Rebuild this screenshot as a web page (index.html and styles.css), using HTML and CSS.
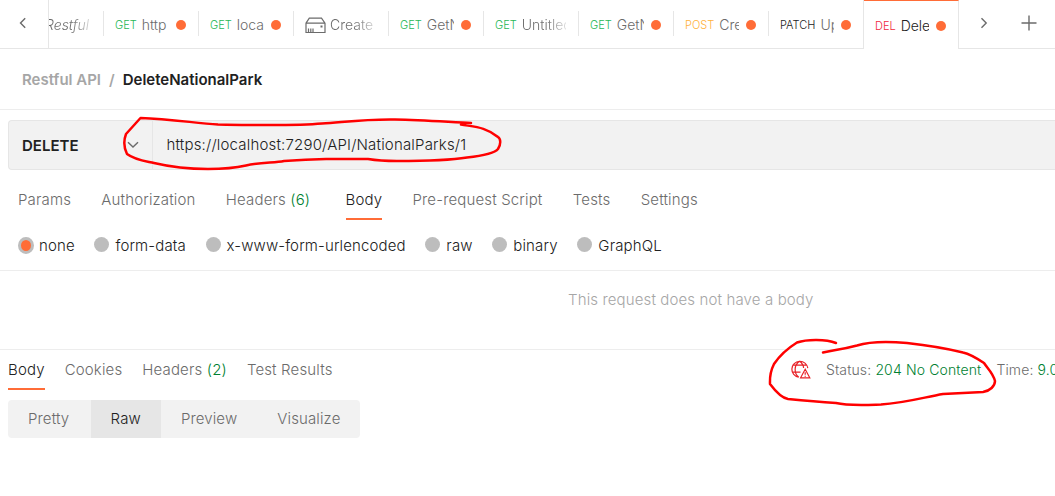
FILE: index.html
```html
<!DOCTYPE html>
<html lang="en">
<head>
<meta charset="utf-8">
<title>DeleteNationalPark</title>
<link rel="stylesheet" href="styles.css">
</head>
<body>
<div class="app">
  <header class="tabbar">
    <div class="scroll-left"><svg width="8" height="12" viewBox="0 0 8 12"><path d="M6.2 1.2 1.5 6 6.2 10.8" class="stroke"/></svg></div>
    <div class="tab first"><span class="title italic fade">Restful</span></div>
    <div class="tab"><span class="verb get">GET</span><span class="title">http</span><i class="dot"></i></div>
    <div class="tab"><span class="verb get">GET</span><span class="title">loca</span><i class="dot"></i></div>
    <div class="tab"><svg class="drive" width="21" height="17" viewBox="0 0 21 17"><path class="line" d="M1 6.2 4.3 1.2H16.5L20 6.2V15.5H1ZM1 6.2H20M3.5 15V11.5M5.8 15V11.5M8 15V11.5"/><path d="M15.5 8.5h2v2h-2z" fill="#6b6b6b"/></svg><span class="title wide fade create">Create</span></div>
    <div class="tab"><span class="verb get">GET</span><span class="title">GetN</span><i class="dot"></i></div>
    <div class="tab"><span class="verb get">GET</span><span class="title wide fade untitled">Untitled</span></div>
    <div class="tab"><span class="verb get">GET</span><span class="title">GetN</span><i class="dot"></i></div>
    <div class="tab"><span class="verb post">POST</span><span class="title">Cre</span><i class="dot"></i></div>
    <div class="tab last"><span class="verb patch">PATCH</span><span class="title">Up</span><i class="dot"></i></div>
    <div class="tab active"><span class="verb del">DEL</span><span class="title">Dele</span><i class="dot"></i></div>
    <div class="tab-actions">
      <svg width="8" height="12" viewBox="0 0 8 12"><path d="M1.5 1.2 6.2 6 1.5 10.8" class="stroke"/></svg>
      <svg class="plus" width="16" height="16" viewBox="0 0 16 16"><path d="M8 .5V15.5M.5 8H15.5" class="stroke"/></svg>
    </div>
  </header>

  <div class="crumbs"><span class="parent">Restful API</span><span class="slash">/</span><span class="current">DeleteNationalPark</span></div>

  <div class="request">
    <div class="urlbar">
      <div class="method"><span>DELETE</span><svg width="12" height="8" viewBox="0 0 12 8"><path d="M1 1.2 6 6 11 1.2" class="stroke"/></svg></div>
      <div class="url">https://localhost:7290/API/NationalParks/1</div>
    </div>
    <nav class="subtabs">
      <span>Params</span><span>Authorization</span><span class="counted">Headers <b>(6)</b></span><span class="on">Body</span><span>Pre-request Script</span><span>Tests</span><span>Settings</span>
    </nav>
    <div class="radios">
      <label class="checked"><i></i><span>none</span></label>
      <label><i></i><span>form-data</span></label>
      <label><i></i><span>x-www-form-urlencoded</span></label>
      <label><i></i><span>raw</span></label>
      <label><i></i><span>binary</span></label>
      <label><i></i><span>GraphQL</span></label>
    </div>
  </div>
  <div class="empty"><span>This request does not have a body</span></div>

  <section class="response">
    <div class="response-head">
      <nav class="subtabs small">
        <span class="on">Body</span><span>Cookies</span><span>Headers <b>(2)</b></span><span>Test Results</span>
      </nav>
      <div class="status">
        <svg class="globe" width="21" height="20" viewBox="0 0 21 20"><path d="M17.8 8.2A8 8 0 1 0 8.8 17.2M9.5 1.2C3.8 5 3.8 13.4 8.8 17.2M9.5 1.2C12.5 3.3 13.5 5.5 13.6 8M2.4 5.2H16.8M2.2 12.2H10.5M15.2 9.2 10.6 17.8H19.8ZM15.2 12.3V14.8M15.2 15.7V16.7"/></svg>
        <span class="code">Status: <b>204 No Content</b></span><span class="time">Time: <b>9.06 s</b></span>
      </div>
    </div>
    <div class="views"><span>Pretty</span><span class="on">Raw</span><span>Preview</span><span>Visualize</span></div>
  </section>

  <svg class="marks" width="1055" height="496" viewBox="0 0 1055 496">
    <path d="M471 123C455 122.5 425 120 395 119.5C365 119 345 122 322 123.5C295 126 250 125 218 124.5C195 123 170 119 140.5 118L126 134C123 142 124 148 127 154C135 160 145 161 154 163C175 168 190 169 208 169C228 169 235 168 246 165.5C260 162 275 163 284 161C300 160 310 159.5 326 159H368C380 161 385 161 397 161C435 161 455 159.5 467 157.5C480 156 494 154 498 149C501 144 501 139 498 137C486 127 475 127 461 124.5"/>
    <path d="M836 343C826 339 807 339 797 342.5C785 350 778 358 774 364C769 374 770 380 770 384C776 392 782 398 788 399C808 401 820 402 836 403C848 406 865 405 881 404.5C905 403 925 397 943 394L983 392C990 391 995 386 995 381C993 373 988 369 984 363C975 357 970 354 963 352.5C945 348 925 345 907 343C885 341 868 342 857 345.5C840 350 834 350 823 352.5"/>
  </svg>
</div>
</body>
</html>
```
FILE: styles.css
```css
* { box-sizing: border-box; }
body { margin: 0; background: #fff; font-family: Inter, "Liberation Sans", sans-serif; font-size: 15px; font-weight: 350; letter-spacing: .13px; color: #212121; }
.app { position: relative; width: 1055px; height: 496px; overflow: hidden; }
svg { display: block; flex: none; }
b { font-weight: inherit; color: #007f31; }
.stroke { fill: none; stroke: #6b6b6b; stroke-width: 1.4; }

.tabbar { display: flex; height: 49px; letter-spacing: 0; }
.scroll-left { width: 49px; flex: none; border-right: 1px solid #e6e6e6; border-bottom: 1px solid #e6e6e6; padding: 17px 0 0 19px; }
.tab { width: 95px; flex: none; display: flex; align-items: center; height: 49px; padding: 2px 13px 0 11px; border-bottom: 1px solid #e6e6e6; background: linear-gradient(#e6e6e6, #e6e6e6) right 11px / 1px 25px no-repeat; }
.tab.first { width: 55px; padding-left: 0; overflow: hidden; }
.tab.last { background: none; border-right: 1px solid #e6e6e6; padding-right: 12px; }
.tab.active { background: none; border: 0; border-top: 1px solid #ff6c37; border-right: 1px solid #e6e6e6; padding: 1px 12px 0 11px; }
.verb { font-size: 11px; margin-right: 5px; flex: none; }
.get { color: #26b755; }
.post { color: #ffb13a; }
.patch { color: #212121; }
.del { color: #f0253c; }
.title { flex: 1; min-width: 0; overflow: hidden; white-space: nowrap; font-size: 14px; line-height: 20px; color: #6b6b6b; margin-right: 7px; }
.title.wide { margin-right: 0; }
.title.italic { font-style: italic; flex: none; width: 42px; margin: 0; text-indent: -4px; }
.title.fade { color: transparent; background: linear-gradient(90deg, #6b6b6b 55%, #ddd 100%); background-clip: text; -webkit-background-clip: text; }
.active .title { color: #212121; }
.dot { width: 10px; height: 10px; border-radius: 5px; background: #ff6c37; flex: none; }
.drive { margin-right: 4px; }
.line { fill: none; stroke: #6b6b6b; stroke-width: 1.2; }
.tab-actions { flex: 1; display: flex; border-bottom: 1px solid #e6e6e6; padding: 17px 0 0 21px; }
.plus { margin: -2px 0 0 33px; }

.crumbs { display: flex; align-items: center; height: 61px; border-bottom: 1px solid #ededed; padding-left: 22px; font-weight: 600; letter-spacing: 0; white-space: pre; }
.parent, .slash { color: #a6a6a6; }
.slash { margin: 0 8px; }

.request { height: 161px; padding: 10px 0 0 8px; border-bottom: 1px solid #ededed; }
.urlbar { display: flex; height: 50px; border: 1px solid #e6e6e6; border-right: 0; border-radius: 4px 0 0 4px; background: #f2f2f2; }
.method { display: flex; align-items: center; justify-content: space-between; width: 144px; padding: 0 13px; border-right: 1px solid #e6e6e6; font-weight: 600; letter-spacing: 0; }
.url { padding-left: 13.5px; line-height: 48px; letter-spacing: .18px; }
.subtabs { display: flex; gap: 30.3px; height: 50px; padding-left: 10px; color: #6b6b6b; white-space: nowrap; letter-spacing: .15px; }
.subtabs > span { height: 50px; line-height: 60px; border-bottom: 2.5px solid transparent; }
.subtabs .counted { margin-right: 5px; }
.subtabs .on { color: #212121; border-color: #ff6c37; }
.radios { display: flex; height: 50px; align-items: center; padding-left: 10px; }
.radios label { display: flex; align-items: center; margin-right: 19.7px; }
.radios i { width: 15px; height: 15px; border-radius: 50%; background: #bdbdbd; margin: -1px 6px 0 0; }
.radios .checked i { width: 16px; height: 17px; background: #ff6c37; border: 3px solid #bdbdbd; margin: 0 5px 0 0; }

.empty { height: 79px; padding: 20px 0 0 568px; line-height: 18px; color: #a6a6a6; border-bottom: 1px solid #ededed; white-space: nowrap; }
.response-head { display: flex; height: 50px; }
.small { gap: 20px; padding-left: 8px; height: 40px; width: 790px; flex: none; }
.small > span { height: 40px; line-height: 40px; }
.status { display: flex; font-size: 14px; line-height: 40px; color: #6b6b6b; white-space: nowrap; }
.globe { margin: 10px 15px 0 0; }
.globe path { fill: none; stroke: #e82127; stroke-width: 1.2; }
.time { margin-left: 15px; }
.views { display: flex; width: 352px; height: 38px; margin-left: 8px; border-radius: 4px; overflow: hidden; background: #f2f2f2; color: #6b6b6b; line-height: 38px; }
.views span { padding: 0 20px; }
.views span:first-child { padding-right: 21.3px; }
.views .on { background: #e6e6e6; color: #212121; }
.marks { position: absolute; left: 0; top: 0; }
.marks path { fill: none; stroke: #f00; stroke-width: 2.5; stroke-linecap: round; stroke-linejoin: round; }
```
